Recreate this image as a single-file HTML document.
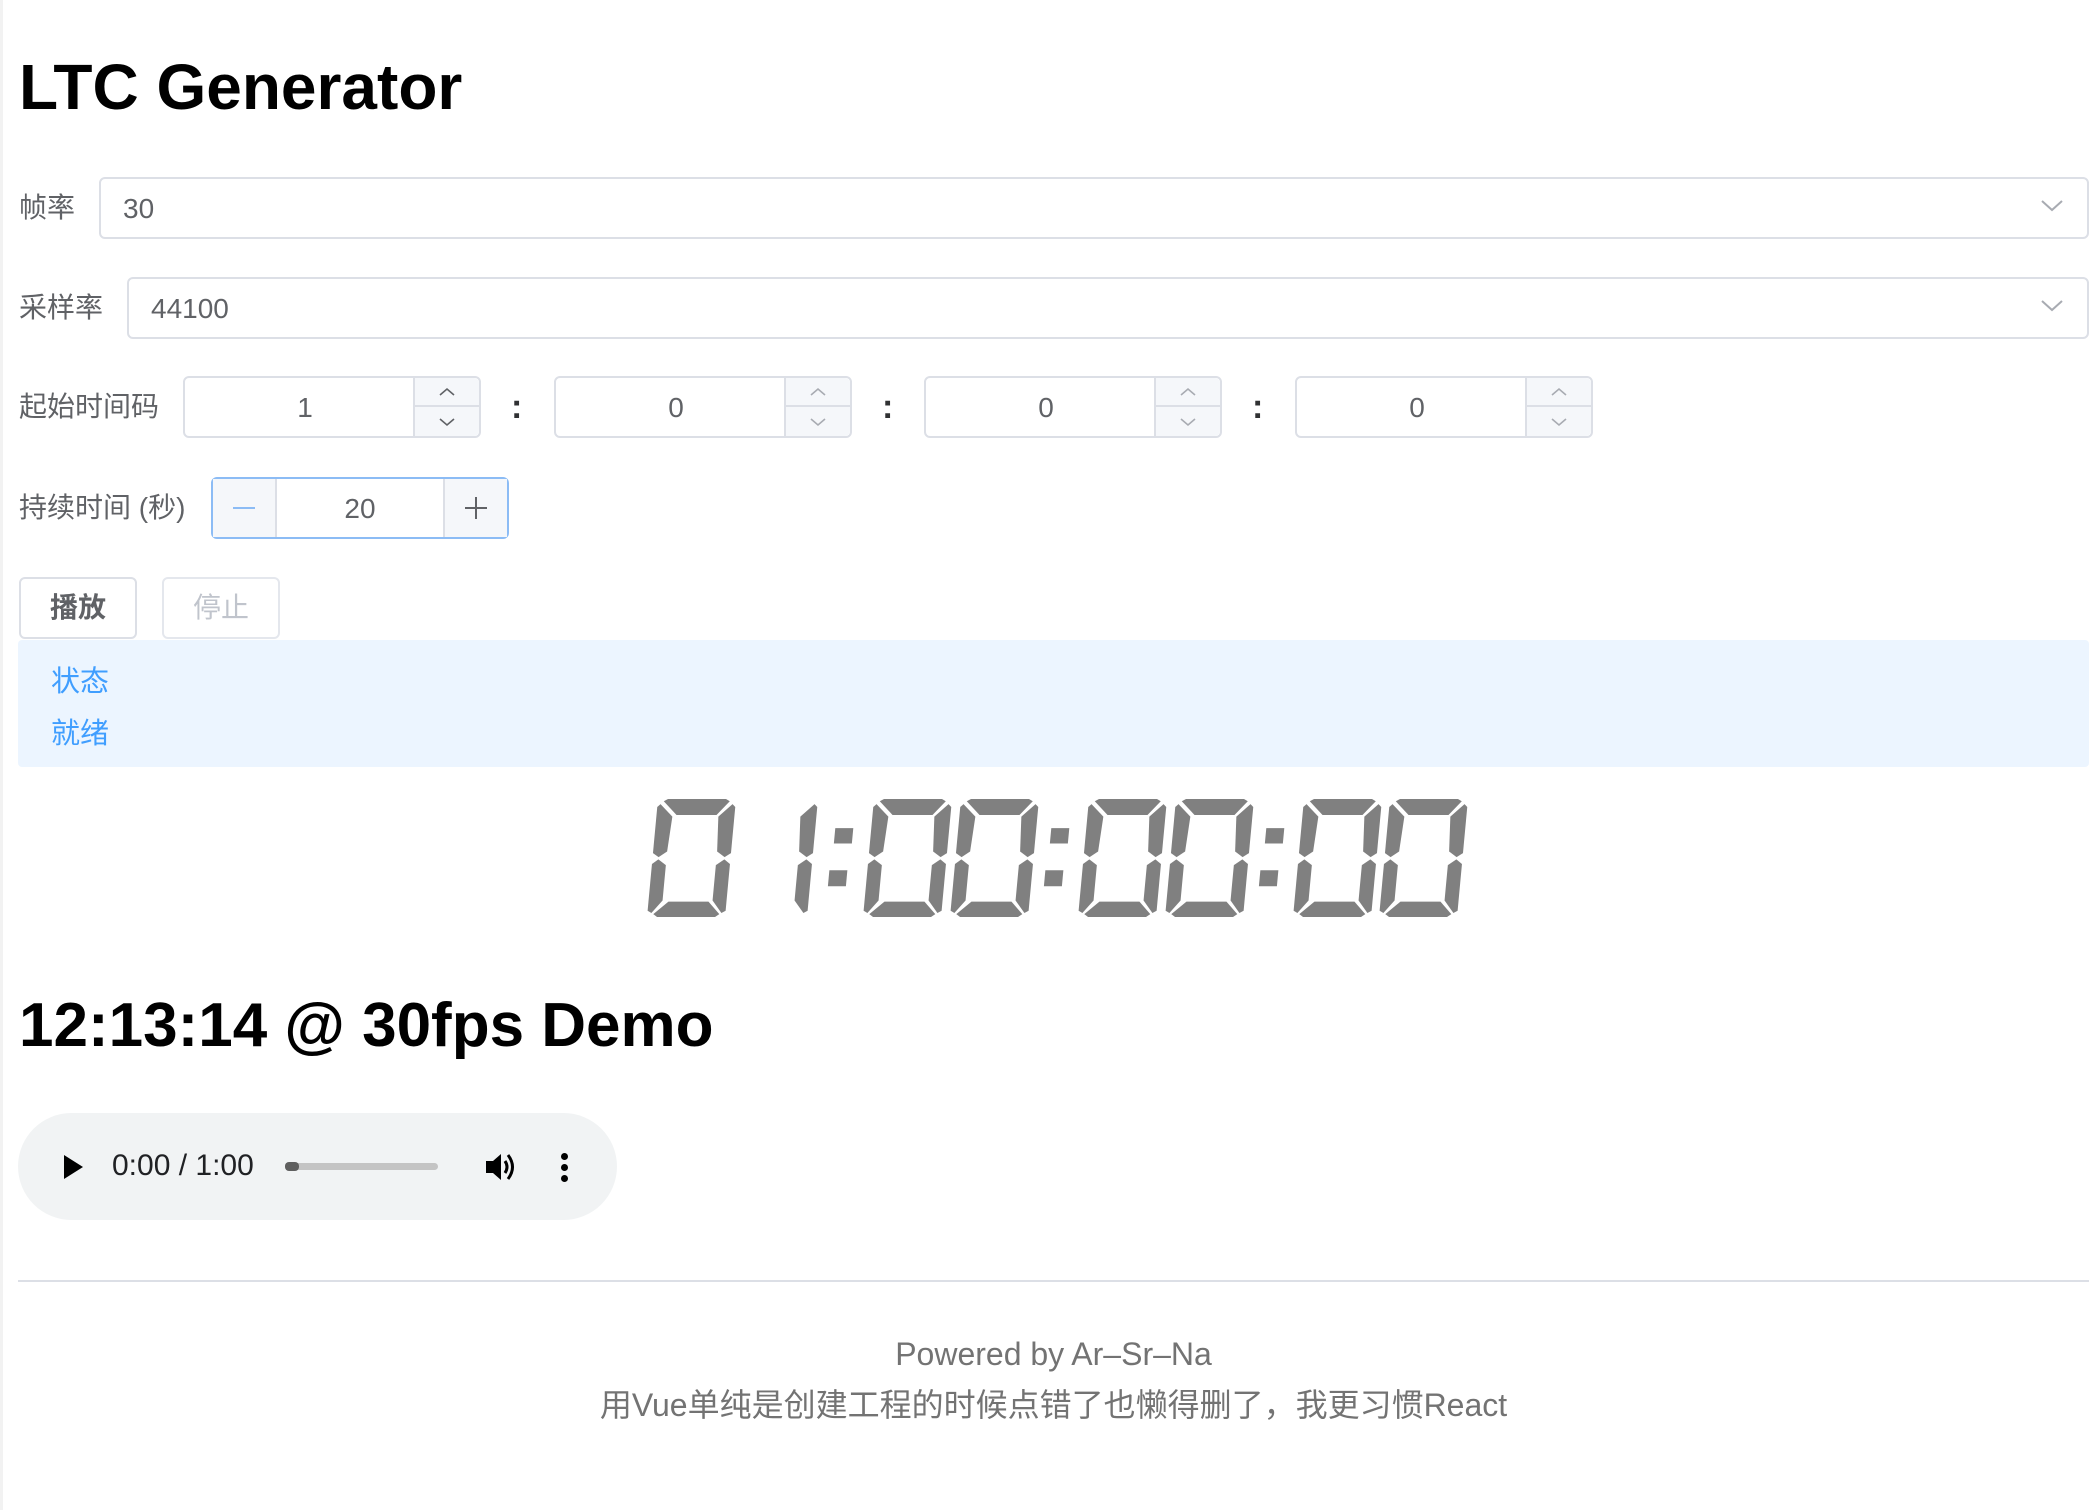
<!DOCTYPE html>
<html><head><meta charset="utf-8"><style>
*{box-sizing:border-box;margin:0;padding:0}
body{width:2100px;height:1510px;background:#fff;font-family:"Liberation Sans","Noto Sans CJK SC",sans-serif;position:relative;overflow:hidden;color:#606266}
.a{position:absolute}
.lbl{font-size:28px;color:#606266;line-height:62px}
.box{border:2px solid #dcdfe6;border-radius:6px;background:#fff}
.val{font-size:28px;color:#606266}
.spin{position:absolute;right:0;top:0;bottom:0;width:66px;background:#f5f7fa;border-left:2px solid #dcdfe6;border-radius:0 5px 5px 0}
.spin div{height:50%;display:flex;align-items:center;justify-content:center}
.spin div:first-child{border-bottom:2px solid #dcdfe6}
.colon{font-size:34px;color:#303133;font-weight:bold}
</style></head><body>
<div class="a" style="left:0;top:0;width:3px;height:1510px;background:#f2f2f2"></div>
<div class="a" style="left:19px;top:50px;font-size:64px;font-weight:bold;color:#000">LTC Generator</div>

<div class="a lbl" style="left:19px;top:177px">帧率</div>
<div class="a box" style="left:99px;top:177px;width:1990px;height:62px"><span class="a val" style="left:22px;top:14px">30</span>
<svg class="a" style="right:24px;top:20px" width="22" height="14" viewBox="0 0 22 14"><path d="M1 2 L11 11 L21 2" fill="none" stroke="#a8abb2" stroke-width="2"/></svg></div>

<div class="a lbl" style="left:19px;top:277px">采样率</div>
<div class="a box" style="left:127px;top:277px;width:1962px;height:62px"><span class="a val" style="left:22px;top:14px">44100</span>
<svg class="a" style="right:24px;top:20px" width="22" height="14" viewBox="0 0 22 14"><path d="M1 2 L11 11 L21 2" fill="none" stroke="#a8abb2" stroke-width="2"/></svg></div>

<div class="a lbl" style="left:19px;top:376px">起始时间码</div>
<div class="a box" style="left:183px;top:376px;width:298px;height:62px"><span class="a val" style="left:4px;width:232px;text-align:center;top:14px">1</span><div class="spin"><div><svg width="16" height="10"><path d="M1 8 L8 2 L15 8" fill="none" stroke="#606266" stroke-width="1.6"/></svg></div><div><svg width="16" height="10"><path d="M1 2 L8 8 L15 2" fill="none" stroke="#606266" stroke-width="1.6"/></svg></div></div></div>
<div class="a colon" style="left:511px;top:388px">:</div>
<div class="a box" style="left:554px;top:376px;width:298px;height:62px"><span class="a val" style="left:4px;width:232px;text-align:center;top:14px">0</span><div class="spin"><div><svg width="16" height="10"><path d="M1 8 L8 2 L15 8" fill="none" stroke="#a8abb2" stroke-width="1.6"/></svg></div><div><svg width="16" height="10"><path d="M1 2 L8 8 L15 2" fill="none" stroke="#a8abb2" stroke-width="1.6"/></svg></div></div></div>
<div class="a colon" style="left:882px;top:388px">:</div>
<div class="a box" style="left:924px;top:376px;width:298px;height:62px"><span class="a val" style="left:4px;width:232px;text-align:center;top:14px">0</span><div class="spin"><div><svg width="16" height="10"><path d="M1 8 L8 2 L15 8" fill="none" stroke="#a8abb2" stroke-width="1.6"/></svg></div><div><svg width="16" height="10"><path d="M1 2 L8 8 L15 2" fill="none" stroke="#a8abb2" stroke-width="1.6"/></svg></div></div></div>
<div class="a colon" style="left:1252px;top:388px">:</div>
<div class="a box" style="left:1295px;top:376px;width:298px;height:62px"><span class="a val" style="left:4px;width:232px;text-align:center;top:14px">0</span><div class="spin"><div><svg width="16" height="10"><path d="M1 8 L8 2 L15 8" fill="none" stroke="#a8abb2" stroke-width="1.6"/></svg></div><div><svg width="16" height="10"><path d="M1 2 L8 8 L15 2" fill="none" stroke="#a8abb2" stroke-width="1.6"/></svg></div></div></div>

<div class="a lbl" style="left:19px;top:477px">持续时间 (秒)</div>
<div class="a" style="left:211px;top:477px;width:298px;height:62px;border:2px solid #8cbcf5;border-radius:6px;background:#fff">
<div class="a" style="left:0;top:0;width:64px;height:58px;background:#f5f7fa;border-right:2px solid #dcdfe6;display:flex;align-items:center;justify-content:center"><div style="width:22px;height:2px;background:#8cbcf5"></div></div>
<span class="a val" style="left:64px;width:166px;text-align:center;top:14px">20</span>
<div class="a" style="right:0;top:0;width:64px;height:58px;background:#f5f7fa;border-left:2px solid #dcdfe6;display:flex;align-items:center;justify-content:center"><svg width="24" height="24"><path d="M12 1V23M1 12H23" stroke="#606266" stroke-width="2"/></svg></div></div>

<div class="a box" style="left:19px;top:577px;width:118px;height:62px;font-size:28px;font-weight:bold;color:#606266;text-align:center;line-height:58px">播放</div>
<div class="a box" style="left:162px;top:577px;width:118px;height:62px;font-size:28px;color:#c0c4cc;text-align:center;line-height:58px;border-color:#e4e7ed">停止</div>

<div class="a" style="left:18px;top:640px;width:2071px;height:127px;background:#ecf5ff;border-radius:4px">
<div class="a" style="left:33px;top:18px;font-size:29px;color:#409eff">状态</div>
<div class="a" style="left:33px;top:70px;font-size:29px;color:#409eff">就绪</div></div>

<svg class="a" style="left:0;top:0" width="2100" height="1000">
<defs>
<g id="sa"><polygon points="10,0 68,0 72,4 60,28 20,28 6,4"/></g>
<g id="sf"><polygon points="3,9 16,31 14,92 6,102 0,95 0,14"/></g>
<g id="sb"><polygon points="75,9 78,14 78,95 72,102 64,92 62,31"/></g>
<g id="se"><polygon points="6,106 14,116 14,178 4,200 0,196 0,114"/></g>
<g id="sc"><polygon points="72,106 78,114 78,196 74,200 64,178 64,116"/></g>
<g id="sd"><polygon points="20,180 60,180 72,202 68,207 10,207 6,202"/></g>
<g id="z"><use href="#sa"/><use href="#sf"/><use href="#sb"/><use href="#se"/><use href="#sc"/><use href="#sd"/></g>
<g id="o"><use href="#sb"/><use href="#sc"/></g>
<g id="k"><rect x="2" y="51" width="18" height="27"/><rect x="0" y="125" width="18" height="28"/></g>
</defs>
<g fill="#808080">
<g transform="translate(0,799)">
<g transform="matrix(1,0,-0.053,0.57,658,0)"><use href="#z"/></g>
<g transform="matrix(1,0,-0.053,0.57,740,0)"><use href="#o"/></g>
<g transform="matrix(1,0,-0.053,0.57,836,0)"><use href="#k"/></g>
<g transform="matrix(1,0,-0.053,0.57,874,0)"><use href="#z"/></g>
<g transform="matrix(1,0,-0.053,0.57,961,0)"><use href="#z"/></g>
<g transform="matrix(1,0,-0.053,0.57,1052,0)"><use href="#k"/></g>
<g transform="matrix(1,0,-0.053,0.57,1089,0)"><use href="#z"/></g>
<g transform="matrix(1,0,-0.053,0.57,1176,0)"><use href="#z"/></g>
<g transform="matrix(1,0,-0.053,0.57,1267,0)"><use href="#k"/></g>
<g transform="matrix(1,0,-0.053,0.57,1304,0)"><use href="#z"/></g>
<g transform="matrix(1,0,-0.053,0.57,1390,0)"><use href="#z"/></g>
</g></g></svg>

<div class="a" style="left:19px;top:990px;font-size:62px;font-weight:bold;color:#000">12:13:14 @ 30fps Demo</div>

<div class="a" style="left:18px;top:1113px;width:599px;height:107px;background:#f1f3f4;border-radius:54px">
<svg class="a" style="left:44px;top:41px" width="22" height="26"><path d="M2 1 L21 13 L2 25Z" fill="#000"/></svg>
<div class="a" style="left:94px;top:36px;font-size:30px;color:#202124">0:00 / 1:00</div>
<div class="a" style="left:267px;top:50px;width:153px;height:7px;background:#c4c4c4;border-radius:4px"></div>
<div class="a" style="left:267px;top:49px;width:14px;height:9px;background:#5f5f5f;border-radius:4px"></div>
<svg class="a" style="left:466px;top:38px" width="34" height="32" viewBox="0 0 34 32"><path d="M2 10H9L17 3V29L9 22H2Z" fill="#000"/><path d="M21 10Q25 16 21 22" fill="none" stroke="#000" stroke-width="3"/><path d="M24 4Q33 16 24 28" fill="none" stroke="#000" stroke-width="3"/></svg>
<div class="a" style="left:543px;top:40px;width:7px;height:7px;border-radius:50%;background:#000;box-shadow:0 11px 0 #000,0 22px 0 #000"></div>
</div>

<div class="a" style="left:18px;top:1280px;width:2071px;height:2px;background:#dcdfe6"></div>
<div class="a" style="left:18px;top:1336px;width:2071px;text-align:center;font-size:32px;color:#737373">Powered by Ar–Sr–Na</div>
<div class="a" style="left:18px;top:1380px;width:2071px;text-align:center;font-size:32px;color:#737373">用Vue单纯是创建工程的时候点错了也懒得删了，我更习惯React</div>
</body></html>
